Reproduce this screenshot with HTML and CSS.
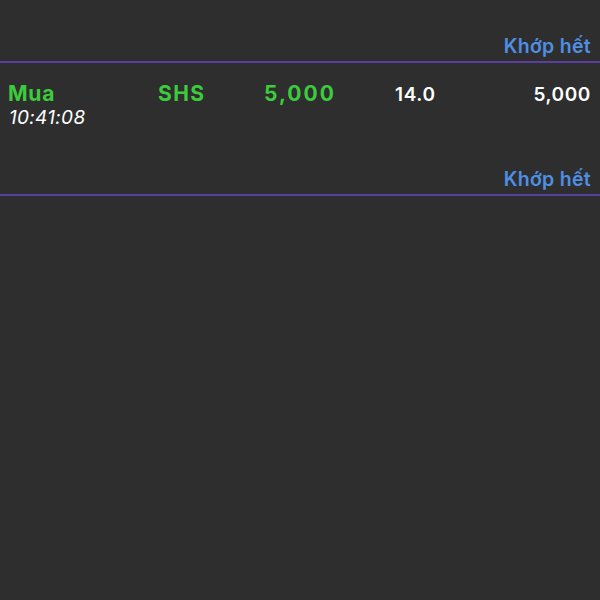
FILE: index.html
```html
<!DOCTYPE html>
<html lang="vi">
  <head>
    <meta charset="UTF-8" />
    <meta name="viewport" content="width=device-width, initial-scale=1.0" />
    <title>Lệnh khớp</title>
    <link rel="stylesheet" href="styles.css">
  </head>
  <body>
    <div class="status">Khớp hết</div>

    <div class="order">
      <div class="order-row">
        <span class="side buy">Mua</span>
        <span class="symbol buy">SHS</span>
        <span class="qty buy">5,000</span>
        <span class="price">14.0</span>
        <span class="matched">5,000</span>
      </div>
      <div class="time">10:41:08</div>
      <div class="status">Khớp hết</div>
    </div>
  </body>
</html>
```

FILE: styles.css
```css
body {
  font-family: Inter, "Liberation Sans", Arial, sans-serif;
  background-color: #2e2e2e;
  color: #fff;
  margin: 0;
  padding: 0;
}

.status {
  text-align: right;
  color: #4f8fe3;
  font-size: 19.5px;
  font-weight: 600;
  letter-spacing: 0.3px;
  line-height: 22px;
  padding: 35px 9px 4px;
  border-bottom: 2px solid #5a3f9e;
}

.order .status {
  padding-top: 40px;
}

.order-row {
  display: grid;
  grid-template-columns: 150px 106px 131px 1fr auto;
  align-items: baseline;
  padding: 19px 9px 0 8px;
  line-height: 24px;
}

.side,
.symbol,
.qty {
  font-size: 21px;
  font-weight: 700;
  letter-spacing: 0.8px;
}

.symbol {
  letter-spacing: 1.4px;
}

.qty {
  letter-spacing: 2px;
}

.buy {
  color: #3ccb3c;
}

.price,
.matched {
  font-size: 19px;
  font-weight: 600;
  letter-spacing: 0.6px;
}

.time {
  font-size: 19px;
  font-style: italic;
  line-height: 21px;
  padding-left: 9px;
  letter-spacing: 0.3px;
}
```
